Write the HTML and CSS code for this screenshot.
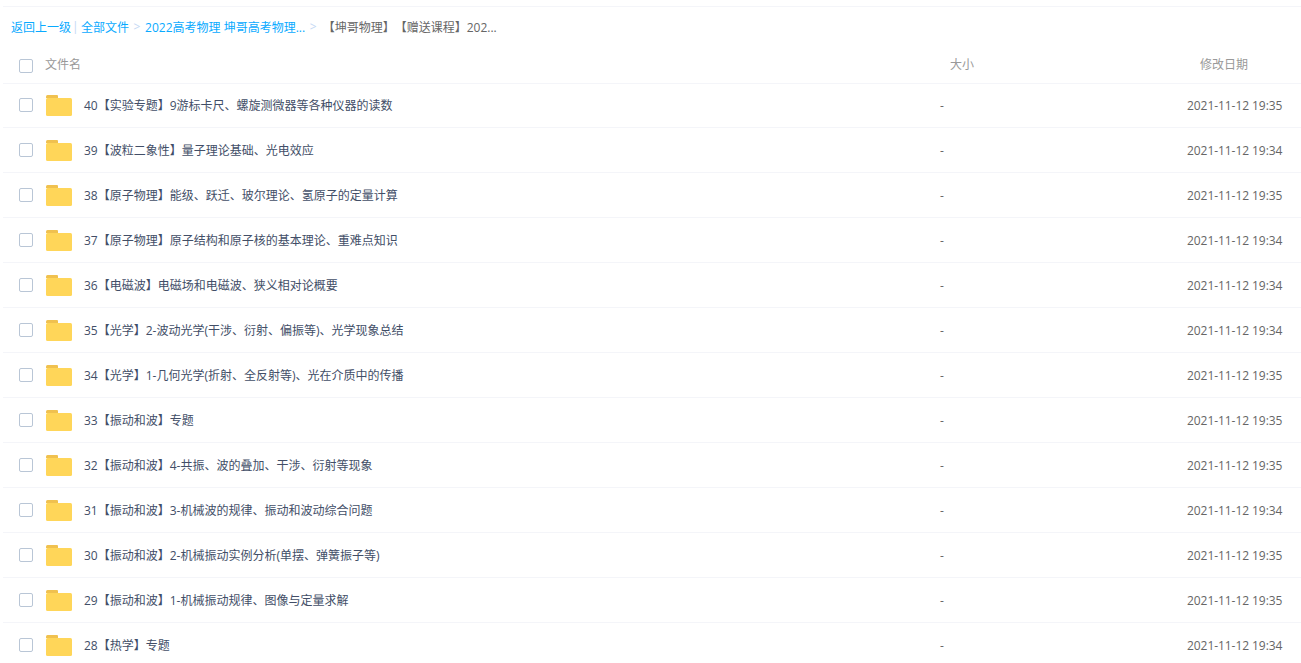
FILE: index.html
```html
<!DOCTYPE html>
<html lang="zh-CN">
<head>
    <meta charset="UTF-8">
    <title>文件列表</title>
    <link rel="stylesheet" href="styles.css">
</head>
<body>
    <svg width="0" height="0" class="defs">
        <symbol id="folder" viewBox="0 0 26 21">
            <path d="M1.5 0H11Q12 0 12 1V3H0V1.5Q0 0 1.5 0Z" fill="#f0c14f"/>
            <path d="M1.5 3H24.5Q26 3 26 4.5V19.5Q26 21 24.5 21H1.5Q0 21 0 19.5V4.5Q0 3 1.5 3Z" fill="#ffd659"/>
        </symbol>
    </svg>
    <div class="page">
        <div class="breadcrumb">
            <a href="#">返回上一级</a>
            <span class="pipe">|</span>
            <a href="#">全部文件</a>
            <span class="sep">&gt;</span>
            <a href="#">2022高考物理 坤哥高考物理...</a>
            <span class="sep">&gt;</span>
            <span class="current">【坤哥物理】【赠送课程】202...</span>
        </div>
        <div class="row head">
            <span class="check"></span>
            <span class="name">文件名</span>
            <span class="size">大小</span>
            <span class="date">修改日期</span>
        </div>
        <div class="row">
            <span class="check"></span>
            <svg class="folder"><use href="#folder"/></svg>
            <span class="name">40【实验专题】9游标卡尺、螺旋测微器等各种仪器的读数</span>
            <span class="size">-</span>
            <span class="date">2021-11-12 19:35</span>
        </div>
        <div class="row">
            <span class="check"></span>
            <svg class="folder"><use href="#folder"/></svg>
            <span class="name">39【波粒二象性】量子理论基础、光电效应</span>
            <span class="size">-</span>
            <span class="date">2021-11-12 19:34</span>
        </div>
        <div class="row">
            <span class="check"></span>
            <svg class="folder"><use href="#folder"/></svg>
            <span class="name">38【原子物理】能级、跃迁、玻尔理论、氢原子的定量计算</span>
            <span class="size">-</span>
            <span class="date">2021-11-12 19:35</span>
        </div>
        <div class="row">
            <span class="check"></span>
            <svg class="folder"><use href="#folder"/></svg>
            <span class="name">37【原子物理】原子结构和原子核的基本理论、重难点知识</span>
            <span class="size">-</span>
            <span class="date">2021-11-12 19:34</span>
        </div>
        <div class="row">
            <span class="check"></span>
            <svg class="folder"><use href="#folder"/></svg>
            <span class="name">36【电磁波】电磁场和电磁波、狭义相对论概要</span>
            <span class="size">-</span>
            <span class="date">2021-11-12 19:34</span>
        </div>
        <div class="row">
            <span class="check"></span>
            <svg class="folder"><use href="#folder"/></svg>
            <span class="name">35【光学】2-波动光学(干涉、衍射、偏振等)、光学现象总结</span>
            <span class="size">-</span>
            <span class="date">2021-11-12 19:34</span>
        </div>
        <div class="row">
            <span class="check"></span>
            <svg class="folder"><use href="#folder"/></svg>
            <span class="name">34【光学】1-几何光学(折射、全反射等)、光在介质中的传播</span>
            <span class="size">-</span>
            <span class="date">2021-11-12 19:35</span>
        </div>
        <div class="row">
            <span class="check"></span>
            <svg class="folder"><use href="#folder"/></svg>
            <span class="name">33【振动和波】专题</span>
            <span class="size">-</span>
            <span class="date">2021-11-12 19:35</span>
        </div>
        <div class="row">
            <span class="check"></span>
            <svg class="folder"><use href="#folder"/></svg>
            <span class="name">32【振动和波】4-共振、波的叠加、干涉、衍射等现象</span>
            <span class="size">-</span>
            <span class="date">2021-11-12 19:35</span>
        </div>
        <div class="row">
            <span class="check"></span>
            <svg class="folder"><use href="#folder"/></svg>
            <span class="name">31【振动和波】3-机械波的规律、振动和波动综合问题</span>
            <span class="size">-</span>
            <span class="date">2021-11-12 19:34</span>
        </div>
        <div class="row">
            <span class="check"></span>
            <svg class="folder"><use href="#folder"/></svg>
            <span class="name">30【振动和波】2-机械振动实例分析(单摆、弹簧振子等)</span>
            <span class="size">-</span>
            <span class="date">2021-11-12 19:35</span>
        </div>
        <div class="row">
            <span class="check"></span>
            <svg class="folder"><use href="#folder"/></svg>
            <span class="name">29【振动和波】1-机械振动规律、图像与定量求解</span>
            <span class="size">-</span>
            <span class="date">2021-11-12 19:35</span>
        </div>
        <div class="row">
            <span class="check"></span>
            <svg class="folder"><use href="#folder"/></svg>
            <span class="name">28【热学】专题</span>
            <span class="size">-</span>
            <span class="date">2021-11-12 19:34</span>
        </div>
    </div>
</body>
</html>
```

FILE: styles.css
```css
*{
    margin: 0;
    padding: 0;
    box-sizing: border-box;
}
html, body{
    height: 663px;
    overflow: hidden;
}
body{
    background: #fff;
    color: #424e67;
    font-family: "Open Sans", "Noto Sans CJK SC", sans-serif;
    font-size: 12px;
}
.defs{
    display: block;
    height: 0;
}
.page{
    margin-top: 6px;
    margin-left: 3px;
    border-top: 1px solid #f4f5f9;
}
.breadcrumb{
    height: 39px;
    padding-left: 8px;
    display: flex;
    align-items: center;
    white-space: nowrap;
}
.breadcrumb a{
    color: #09aaff;
    text-decoration: none;
}
.pipe{
    color: #c4d8f4;
    margin: 0 2.4px 0 1px;
}
.sep{
    color: #c4d8f4;
    margin: 0 4.6px;
}
.current{
    color: #666;
    margin-left: 1.5px;
    text-spacing-trim: space-all;
}
.row{
    height: 45px;
    display: flex;
    align-items: center;
    border-bottom: 1px solid #f4f5f9;
}
.row.head{
    height: 38px;
    margin-bottom: -1px;
    color: #999;
}
.check{
    width: 14px;
    height: 14px;
    margin-left: 16px;
    border: 1px solid #b9c6d6;
    border-radius: 2px;
    flex: none;
}
.head .check{
    margin-top: 3px;
}
.folder{
    width: 26px;
    height: 21px;
    margin-left: 13px;
    flex: none;
}
.name{
    width: 856px;
    margin-left: 12px;
    flex: none;
    white-space: nowrap;
}
.head .name{
    width: 905px;
    margin-left: 12px;
    margin-bottom: 1px;
}
.size{
    width: 247px;
    flex: none;
    color: #666;
}
.head .size{
    width: 250px;
    color: #999;
    margin-bottom: 1px;
}
.date{
    flex: none;
    color: #666;
    letter-spacing: -0.06px;
}
.head .date{
    color: #999;
    margin-bottom: 1px;
    letter-spacing: 0;
}
```
